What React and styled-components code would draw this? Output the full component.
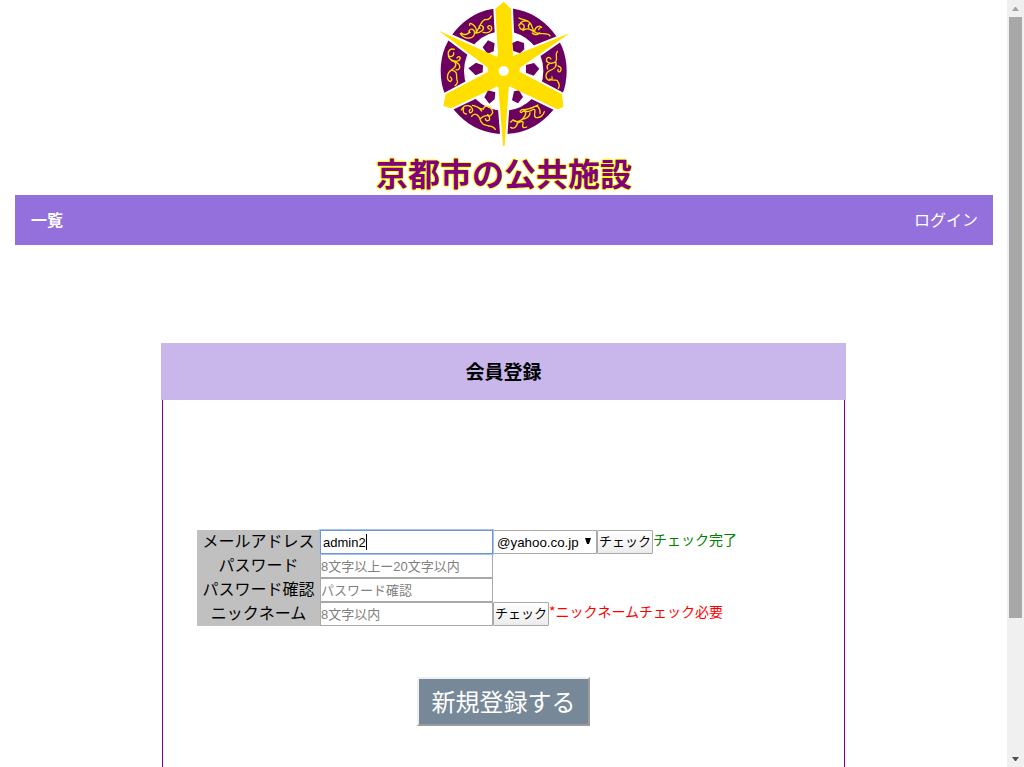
import React from "react";
import styled, { createGlobalStyle } from "styled-components";

const GlobalStyle = createGlobalStyle`
  * { box-sizing: border-box; }
  body {
    margin: 0;
    background: #fff;
    color: #000;
    font: 16px/24px "Noto Sans CJK JP", sans-serif;
    font-weight: 300;
    overflow: hidden;
  }
`;

const Window = styled.div`
  display: flex;
  width: 1024px;
  height: 767px;
  overflow: hidden;
`;

const Page = styled.div`
  width: 1007px;
  height: 767px;
  padding: 0 14px 0 15px;
  display: flex;
  flex-direction: column;
  align-items: center;
`;

const Emblem = styled.svg`
  display: block;
  flex: none;
  width: 150px;
  height: 150px;
  margin-left: 2px;
`;

const SiteTitle = styled.h1`
  flex: none;
  margin: 0;
  height: 45px;
  font-size: 32px;
  line-height: 45px;
  font-weight: 700;
  color: #800080;
  text-shadow: 1px 0 #ff0, -1px 0 #ff0, 0 1px #ff0, 0 -1px #ff0;
`;

const NavBar = styled.nav`
  flex: none;
  display: flex;
  justify-content: space-between;
  align-items: center;
  width: 978px;
  height: 50px;
  padding: 0 15px 2px 16px;
  background: #9370db;
`;

const NavLink = styled.a`
  color: #fff;
  font-weight: ${(p) => (p.$strong ? 700 : 400)};
`;

const Card = styled.section`
  flex: none;
  display: flex;
  flex-direction: column;
  align-items: stretch;
  align-self: flex-start;
  width: 685px;
  margin: 98px 0 0 146px;
`;

const CardHeader = styled.h3`
  width: 100%;
  height: 57px;
  margin: 0;
  font-size: 19px;
  line-height: 55px;
  font-weight: 700;
  text-align: center;
  background: #c9b7ec;
`;

const CardBody = styled.form`
  height: 400px;
  margin: 0 1px;
  padding: 130px 34px 0;
  border-left: 1px solid #800080;
  border-right: 1px solid #800080;
  display: flex;
  flex-direction: column;
`;

const Row = styled.div`
  display: flex;
  height: 24px;
`;

const Label = styled.label`
  width: 123px;
  height: 24px;
  line-height: 20px;
  font-weight: 400;
  text-align: center;
  background: #c0c0c0;
`;

const Input = styled.input`
  width: 173px;
  height: 24px;
  margin: 0;
  padding: 0;
  border: 1px solid #a9a9a9;
  border-radius: 0;
  outline: none;
  background: #fff;
  color: #000;
  font: 13px "Liberation Sans", "Noto Sans CJK JP", sans-serif;
  &::placeholder { color: #808080; opacity: 1; }
`;

const ActiveField = styled.div`
  display: flex;
  align-items: center;
  width: 175px;
  height: 26px;
  margin: -1px -1px -1px -1px;
  padding-left: 2px;
  border: 2px solid #7b9fdb;
  border-color: #a9c1e8;
  outline: 1px solid #7096d8;
  outline-offset: -2px;
  background: #fff;
  font: 13px "Liberation Sans", sans-serif;
  z-index: 1;
`;

const Caret = styled.span`
  width: 1px;
  height: 16px;
  background: #000;
`;

const DomainSelect = styled.div`
  display: flex;
  align-items: center;
  justify-content: space-between;
  width: 104px;
  height: 24px;
  padding: 1px 5px 0 3px;
  border: 1px solid #a9a9a9;
  font: 13.33px "Liberation Sans", sans-serif;
`;

const Arrow = styled.svg`
  display: block;
  width: 6px;
  height: 6px;
  margin-top: -3px;
`;

const CheckButton = styled.button`
  width: 56px;
  height: 24px;
  margin: 0;
  padding: 0 0 2px;
  border: 1px solid #a9a9a9;
  border-radius: 1px;
  background: linear-gradient(#fff, #ececec);
  color: #000;
  font: 13px/20px "Noto Sans CJK JP", sans-serif;
  white-space: nowrap;
`;

const Message = styled.span`
  font-size: 14px;
  line-height: 18px;
  font-weight: 400;
  white-space: nowrap;
  color: ${(p) => (p.$error ? "#f00" : "#008000")};
`;

const SubmitButton = styled.button`
  align-self: center;
  width: 173px;
  height: 49px;
  margin: 51px 0 0;
  padding: 0 0 2px;
  border: 2px solid;
  border-color: #f0f0f0 #9b9b9b #9b9b9b #f0f0f0;
  border-radius: 0;
  background: #778899;
  color: #fff;
  font: 24px/40px "Noto Sans CJK JP", sans-serif;
  white-space: nowrap;
`;

const ScrollTrack = styled.div`
  display: flex;
  flex-direction: column;
  align-items: center;
  width: 17px;
  height: 767px;
  background: #f0f0f0;
`;

const ScrollArrow = styled.svg`
  display: block;
  flex: none;
  width: 17px;
  height: 17px;
`;

const ScrollThumb = styled.div`
  flex: none;
  width: 13px;
  height: 601px;
  margin-bottom: auto;
  background: #a8a8a8;
`;

const PURPLE = "#6c0061";
const GOLD = "#ffdf00";

const BLADES = [
  "M221 5 243 26 249 167 204 167 196 26Z",
  "M26 92 200 170 175 204Z",
  "M420 99 269 204 243 170Z",
  "M173 216 200 260 63 325 40 318 47 283Z",
  "M270 216 241 260 382 328 400 321 396 283Z",
  "M204 250H237L224 438H219Z",
];

function Logo() {
  return (
    <Emblem viewBox="0 0 450 450">
      <circle cx="221" cy="213" r="154" fill="none" stroke={PURPLE} strokeWidth="70" />
      <g fill="#fff" stroke="#fff" strokeWidth="12">
        {BLADES.map((d) => <path key={d} d={d} />)}
      </g>
      <g fill={PURPLE}>
        <path d="M174 121 194 130 191 154 172 161 158 142Z" />
        <path d="M262 122 282 129 283 148 270 160 250 153 246 130Z" />
        <path d="M115 205 138 188 159 196 158 217 137 226Z" />
        <path d="M288 195 312 189 328 206 311 227 288 218Z" />
        <path d="M174 271 196 277 194 298 178 311 163 292Z" />
        <path d="M252 274 267 271 279 291 264 310 246 301Z" />
      </g>
      <g fill={GOLD}>
        {BLADES.map((d) => <path key={d} d={d} />)}
        <path d="M204 165H247L269 202V225L240 260H200L173 225V202Z" />
      </g>
      <circle cx="221" cy="213" r="15" fill="#fff" />
      <g fill="none" stroke={GOLD} strokeWidth="4" strokeLinecap="round" strokeLinejoin="round">
        <path d="M91 101C106 123 139 116 133 94C128 81 113 89 120 98M94 99C104 109 120 100 117 92M119 76Q117 69 124 71C137 78 142 87 138 99C149 100 165 89 159 80C151 72 143 79 150 85M135 99C148 92 148 67 165 58Q177 62 184 48M159 97C181 103 191 86 182 78C172 74 170 85 179 87" />
        <path d="M267 54C277 61 290 57 298 67C311 77 303 90 317 98C331 105 355 95 360 108M266 77C271 64 287 74 281 86Q270 91 269 81M279 91C296 82 303 89 313 96C315 80 329 74 335 82Q328 81 326 89M300 70Q293 75 296 83M294 64Q280 60 272 68M329 99Q317 109 307 99" />
        <path d="M73 148C58 143 50 158 58 169C66 172 73 165 71 158M55 164C55 179 73 187 86 182C95 174 88 164 81 174M64 182C82 187 81 199 66 209C50 218 48 240 61 245Q70 238 61 231M79 187C96 196 89 213 78 209M67 211C88 215 75 234 83 246Q80 254 75 257" />
        <path d="M382 154C373 165 386 177 376 186C365 193 346 190 350 176Q357 168 363 177M376 185C383 197 374 207 361 211C344 217 345 237 357 241Q369 240 366 231M384 198Q399 203 390 215Q382 217 384 208M359 237C373 246 382 234 384 246Q391 255 385 265M353 207Q348 197 357 192" />
        <path d="M94 330C103 310 126 315 128 331C124 344 112 337 121 328M101 324Q96 340 109 342M127 316C140 316 148 328 160 327C165 310 188 321 188 338Q180 354 173 343M125 349C135 334 146 348 151 356C165 342 183 345 178 360Q168 366 166 356M149 355C155 376 165 374 176 378Q189 378 196 388M130 317Q146 320 155 333" />
        <path d="M242 382C252 389 264 377 262 366Q250 356 242 366M249 359C259 371 277 362 283 350C292 338 284 326 274 338Q266 336 275 329C295 330 306 324 324 315M283 332Q296 339 310 328C322 328 308 342 316 352C331 356 341 344 343 335M264 369Q284 358 278 374Q276 387 290 381M281 357Q300 351 300 338M319 317Q332 325 330 340" />
      </g>
    </Emblem>
  );
}

export default function App() {
  return (
    <Window>
      <GlobalStyle />
      <Page>
        <Logo />
        <SiteTitle>京都市の公共施設</SiteTitle>
        <NavBar>
          <NavLink $strong>一覧</NavLink>
          <NavLink>ログイン</NavLink>
        </NavBar>
        <Card>
          <CardHeader>会員登録</CardHeader>
          <CardBody>
            <Row>
              <Label>メールアドレス</Label>
              <ActiveField>admin2<Caret /></ActiveField>
              <DomainSelect>
                @yahoo.co.jp
                <Arrow viewBox="0 0 6 6"><path d="M0 0H6L4 6H2Z" /></Arrow>
              </DomainSelect>
              <CheckButton type="button">チェック</CheckButton>
              <Message>チェック完了</Message>
            </Row>
            <Row>
              <Label>パスワード</Label>
              <Input placeholder="8文字以上ー20文字以内" />
            </Row>
            <Row>
              <Label>パスワード確認</Label>
              <Input placeholder="パスワード確認" />
            </Row>
            <Row>
              <Label>ニックネーム</Label>
              <Input placeholder="8文字以内" />
              <CheckButton type="button">チェック</CheckButton>
              <Message $error>*ニックネームチェック必要</Message>
            </Row>
            <SubmitButton type="button">新規登録する</SubmitButton>
          </CardBody>
        </Card>
      </Page>
      <ScrollTrack>
        <ScrollArrow viewBox="0 0 17 17"><path fill="#a3a3a3" d="M8 7H9L12 11H5Z" /></ScrollArrow>
        <ScrollThumb />
        <ScrollArrow viewBox="0 0 17 17"><path fill="#505050" d="M5 7H12L9 11H8Z" /></ScrollArrow>
      </ScrollTrack>
    </Window>
  );
}
